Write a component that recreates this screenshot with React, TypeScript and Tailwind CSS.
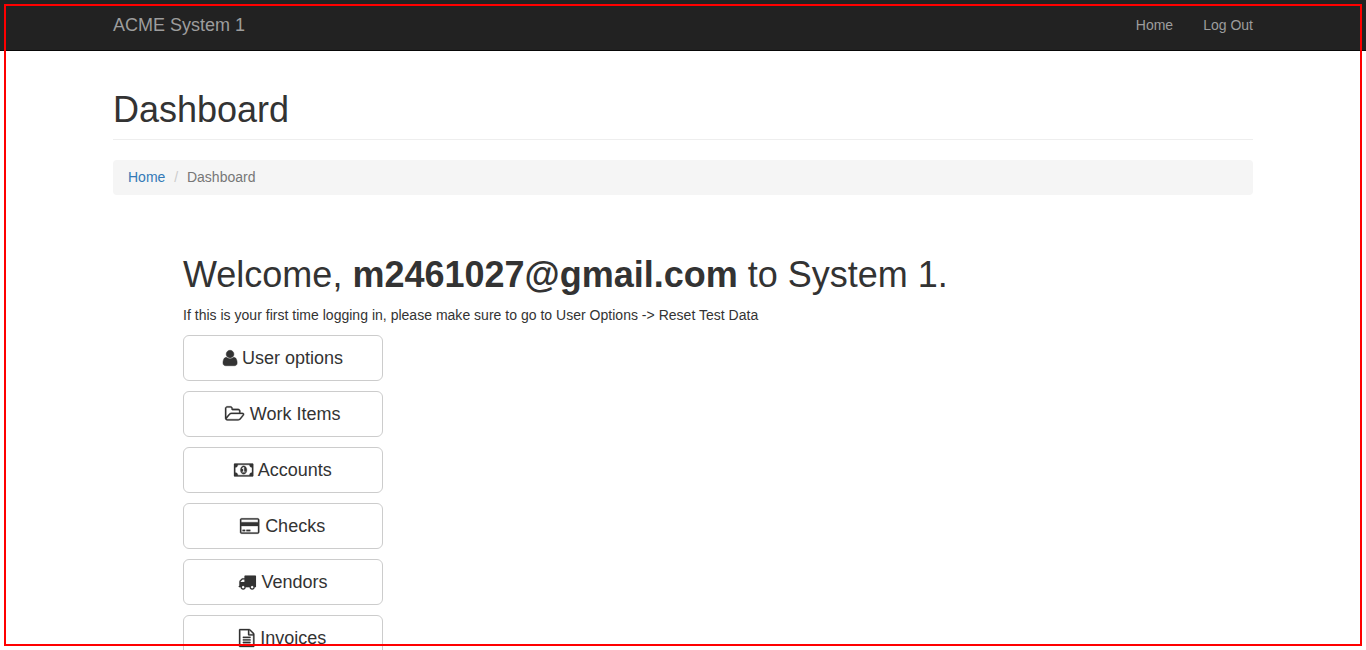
import React from "react";

type MenuItem = { label: string; viewBox: string; width: string; stroke: number; path: string };

const items: MenuItem[] = [
  {
    label: "User options",
    viewBox: "192 0 1408 1792",
    width: "w-[14.14px]",
    stroke: 50,
    path: "M1600 1405q0 120-73 189.5t-194 69.5h-874q-121 0-194-69.5t-73-189.5q0-53 3.5-103.5t14-109 26.5-108.5 43-97.5 62-81 85.5-53.5 111.5-20q9 0 42 21.5t74.5 48 108 48 133.5 21.5 133.5-21.5 108-48 74.5-48 42-21.5q61 0 111.5 20t85.5 53.5 62 81 43 97.5 26.5 108.5 14 109 3.5 103.5zm-320-893q0 159-112.5 271.5t-271.5 112.5-271.5-112.5-112.5-271.5 112.5-271.5 271.5-112.5 271.5 112.5 112.5 271.5z",
  },
  {
    label: "Work Items",
    viewBox: "64 0 1920 1792",
    width: "w-[19.29px]",
    stroke: 30,
    path: "M1845 931q0-35-53-35h-1088q-40 0-85.5 21.5t-71.5 52.5l-294 363q-18 24-18 40 0 35 53 35h1088q40 0 86-22t71-53l294-363q18-22 18-39zm-1141-163h768v-160q0-40-28-68t-68-28h-576q-40 0-68-28t-28-68v-64q0-40-28-68t-68-28h-320q-40 0-68 28t-28 68v853l256-315q44-53 116-87.5t140-34.5zm1269 163q0 62-46 120l-295 363q-43 53-116 87.5t-140 34.5h-1088q-92 0-158-66t-66-158v-960q0-92 66-158t158-66h320q92 0 158 66t66 158v32h544q92 0 158 66t66 158v160h192q54 0 99 24.5t67 70.5q15 32 15 68z",
  },
  {
    label: "Accounts",
    viewBox: "0 0 1920 1792",
    width: "w-[19.29px]",
    stroke: 30,
    path: "M768 1152h384v-96h-128v-448h-114l-148 137 77 80q42-37 55-57h2v288h-128v96zm512-256q0 70-21 142t-59.5 134-101.5 101-138 39-138-39-101.5-101-59.5-134-21-142 21-142 59.5-134 101.5-101 138-39 138 39 101.5 101 59.5 134 21 142zm512 256v-512q-106 0-181-75t-75-181h-1152q0 106-75 181t-181 75v512q106 0 181 75t75 181h1152q0-106 75-181t181-75zm128-832v1152q0 26-19 45t-45 19h-1792q-26 0-45-19t-19-45v-1152q0-26 19-45t45-19h1792q26 0 45 19t19 45z",
  },
  {
    label: "Checks",
    viewBox: "0 0 1920 1792",
    width: "w-[19.29px]",
    stroke: 30,
    path: "M1760 128q66 0 113 47t47 113v1216q0 66-47 113t-113 47h-1600q-66 0-113-47t-47-113v-1216q0-66 47-113t113-47h1600zm-1600 128q-13 0-22.5 9.5t-9.5 22.5v224h1664v-224q0-13-9.5-22.5t-22.5-9.5h-1600zm1600 1280q13 0 22.5-9.5t9.5-22.5v-608h-1664v608q0 13 9.5 22.5t22.5 9.5h1600zm-1504-128v-128h256v128h-256zm384 0v-128h384v128h-384z",
  },
  {
    label: "Vendors",
    viewBox: "0 0 1792 1792",
    width: "w-[18px]",
    stroke: 10,
    path: "M640 1408q0-52-38-90t-90-38-90 38-38 90 38 90 90 38 90-38 38-90zm-384-512h384v-256h-158q-13 0-22 9l-195 195q-9 9-9 22v30zm1280 512q0-52-38-90t-90-38-90 38-38 90 38 90 90 38 90-38 38-90zm256-1088v1024q0 15-4 26.5t-13.5 18.5-16.5 11.5-23.5 6-22.5 2-25.5 0-22.5-.5q0 106-75 181t-181 75-181-75-75-181h-384q0 106-75 181t-181 75-181-75-75-181h-64q-3 0-22.5.5t-25.5 0-22.5-2-23.5-6-16.5-11.5-13.5-18.5-4-26.5q0-26 19-45t45-19v-320q0-8-.5-35t0-38 2.5-34.5 6.5-37 14-30.5 22.5-30l198-198q19-19 50.5-32t58.5-13h160v-192q0-26 19-45t45-19h1024q26 0 45 19t19 45z",
  },
  {
    label: "Invoices",
    viewBox: "128 0 1536 1792",
    width: "w-[15.43px]",
    stroke: 30,
    path: "M1596 380q28 28 48 76t20 88v1152q0 40-28 68t-68 28h-1344q-40 0-68-28t-28-68v-1600q0-40 28-68t68-28h896q40 0 88 20t76 48zm-444-244v376h376q-10-29-22-41l-313-313q-12-12-41-22zm384 1528v-1024h-416q-40 0-68-28t-28-68v-416h-768v1536h1280zm-1024-864q0-14 9-23t23-9h704q14 0 23 9t9 23v64q0 14-9 23t-23 9h-704q-14 0-23-9t-9-23v-64zm736 224q14 0 23 9t9 23v64q0 14-9 23t-23 9h-704q-14 0-23-9t-9-23v-64q0-14 9-23t23-9h704zm0 256q14 0 23 9t9 23v64q0 14-9 23t-23 9h-704q-14 0-23-9t-9-23v-64q0-14 9-23t23-9h704z",
  },
];

function MenuButton({ item }: { item: MenuItem }) {
  return (
    <button className="h-[46px] w-[200px] shrink-0 rounded-md border border-[#ccc] bg-white text-center text-lg leading-6 whitespace-nowrap">
      <svg
        viewBox={item.viewBox}
        preserveAspectRatio="none"
        fill="currentColor"
        stroke="currentColor"
        strokeWidth={item.stroke}
        aria-hidden="true"
        className={`mr-[0.4px] -ml-[0.4px] inline-block h-[18px] overflow-visible align-[-2.57px] ${item.width}`}
      >
        <path d={item.path} />
      </svg>{" "}
      {item.label}
    </button>
  );
}

export default function App() {
  return (
    <div className="relative h-[650px] overflow-hidden bg-white font-['Liberation_Sans',Arial,sans-serif] text-sm leading-5 text-[#333]">
      <nav className="h-[51px] border-b border-[#080808] bg-[#222] text-[#9d9d9d]">
        <div className="mx-auto flex h-[50px] w-[1140px] items-center justify-between">
          <a className="text-lg leading-5">ACME System 1</a>
          <div className="flex gap-[30px]">
            <a>Home</a>
            <a>Log Out</a>
          </div>
        </div>
      </nav>

      <main className="mx-auto w-[1140px] pt-[39px]">
        <header className="h-[50px] border-b border-[#eee]">
          <h1 className="text-[36px] leading-[40px]">Dashboard</h1>
        </header>

        <div className="mt-5 flex h-[35px] items-start rounded bg-[#f5f5f5] px-[15px] pt-[7px]">
          <a className="text-[#337ab7]">Home</a>
          <span className="w-[21.6px] text-center text-[#ccc]">/</span>
          <span className="text-[#777]">Dashboard</span>
        </div>

        <section className="flex flex-col items-start pt-[60px] pl-[70px]">
          <h1 className="text-[36px] leading-[40px] whitespace-nowrap">
            Welcome, <strong className="font-bold">m2461027@gmail.com</strong> to System 1.
          </h1>
          <p className="mt-[10px] tracking-[0.017px]">
            If this is your first time logging in, please make sure to go to User Options -&gt; Reset Test Data
          </p>
          <div className="mt-[10px] flex flex-col gap-[10px]">
            {items.map((item) => (
              <MenuButton key={item.label} item={item} />
            ))}
          </div>
        </section>
      </main>

      <div className="pointer-events-none absolute top-1 left-1 h-[642px] w-[1358px] border-2 border-[#f00]" />
    </div>
  );
}
